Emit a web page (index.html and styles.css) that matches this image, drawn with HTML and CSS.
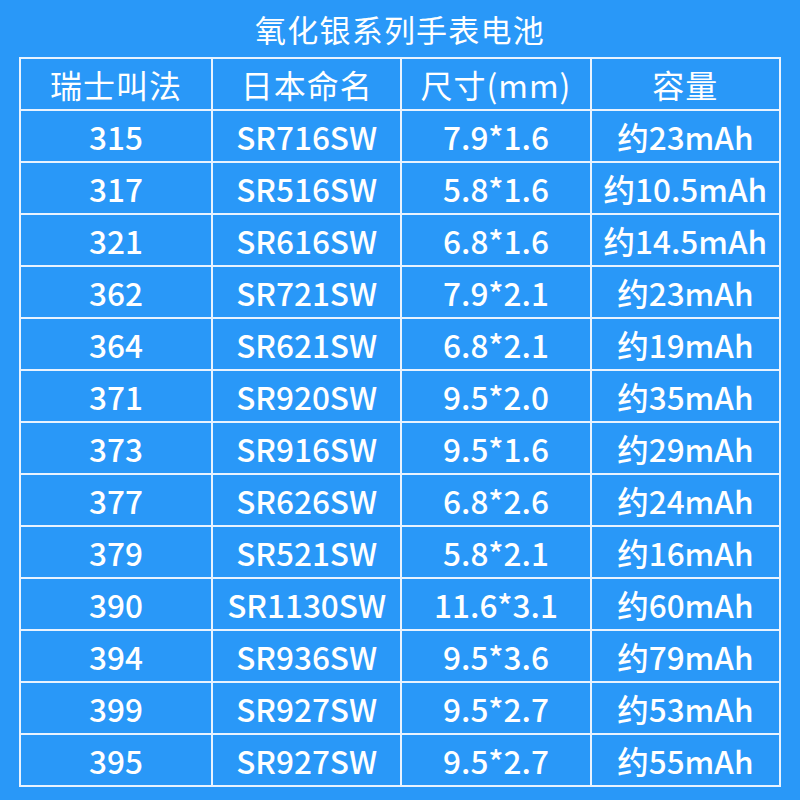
FILE: index.html
```html
<!DOCTYPE html>
<html lang="zh-CN">
<head>
<meta charset="utf-8">
<title>氧化银系列手表电池</title>
<link rel="stylesheet" href="styles.css">
</head>
<body>
<div class="page">
  <h1 class="title">氧化银系列手表电池</h1>
  <table class="spec">
    <thead>
      <tr><th>瑞士叫法</th><th>日本命名</th><th>尺寸(mm)</th><th>容量</th></tr>
    </thead>
    <tbody>
      <tr><td>315</td><td>SR716SW</td><td>7.9*1.6</td><td>约23mAh</td></tr>
      <tr><td>317</td><td>SR516SW</td><td>5.8*1.6</td><td>约10.5mAh</td></tr>
      <tr><td>321</td><td>SR616SW</td><td>6.8*1.6</td><td>约14.5mAh</td></tr>
      <tr><td>362</td><td>SR721SW</td><td>7.9*2.1</td><td>约23mAh</td></tr>
      <tr><td>364</td><td>SR621SW</td><td>6.8*2.1</td><td>约19mAh</td></tr>
      <tr><td>371</td><td>SR920SW</td><td>9.5*2.0</td><td>约35mAh</td></tr>
      <tr><td>373</td><td>SR916SW</td><td>9.5*1.6</td><td>约29mAh</td></tr>
      <tr><td>377</td><td>SR626SW</td><td>6.8*2.6</td><td>约24mAh</td></tr>
      <tr><td>379</td><td>SR521SW</td><td>5.8*2.1</td><td>约16mAh</td></tr>
      <tr><td>390</td><td>SR1130SW</td><td>11.6*3.1</td><td>约60mAh</td></tr>
      <tr><td>394</td><td>SR936SW</td><td>9.5*3.6</td><td>约79mAh</td></tr>
      <tr><td>399</td><td>SR927SW</td><td>9.5*2.7</td><td>约53mAh</td></tr>
      <tr><td>395</td><td>SR927SW</td><td>9.5*2.7</td><td>约55mAh</td></tr>
    </tbody>
  </table>
</div>
</body>
</html>
```
FILE: styles.css
```css
html, body {
  margin: 0;
  padding: 0;
  background: #2998f8;
}
body {
  width: 800px;
  height: 800px;
  overflow: hidden;
  font-family: "Noto Sans CJK SC", "Noto Sans", sans-serif;
  color: #ffffff;
}
.page {
  padding: 0 19px;
}
.title {
  margin: 0;
  height: 57px;
  line-height: 58px;
  font-size: 31px;
  font-weight: 400;
  text-align: center;
  letter-spacing: 1.2px;
}
.spec {
  width: 762px;
  border-collapse: collapse;
  table-layout: fixed;
  border: 2px solid #e8f3ff;
}
.spec th, .spec td {
  border: 2px solid #e8f3ff;
  padding: 0;
  text-align: center;
  white-space: nowrap;
  overflow: hidden;
}
.spec th {
  height: 50px;
  font-size: 32px;
  font-weight: 400;
  letter-spacing: 1px;
}
.spec td {
  height: 50px;
  font-size: 31.5px;
  font-weight: 500;
}
.spec th:first-child, .spec td:first-child { width: 190px; }
```
